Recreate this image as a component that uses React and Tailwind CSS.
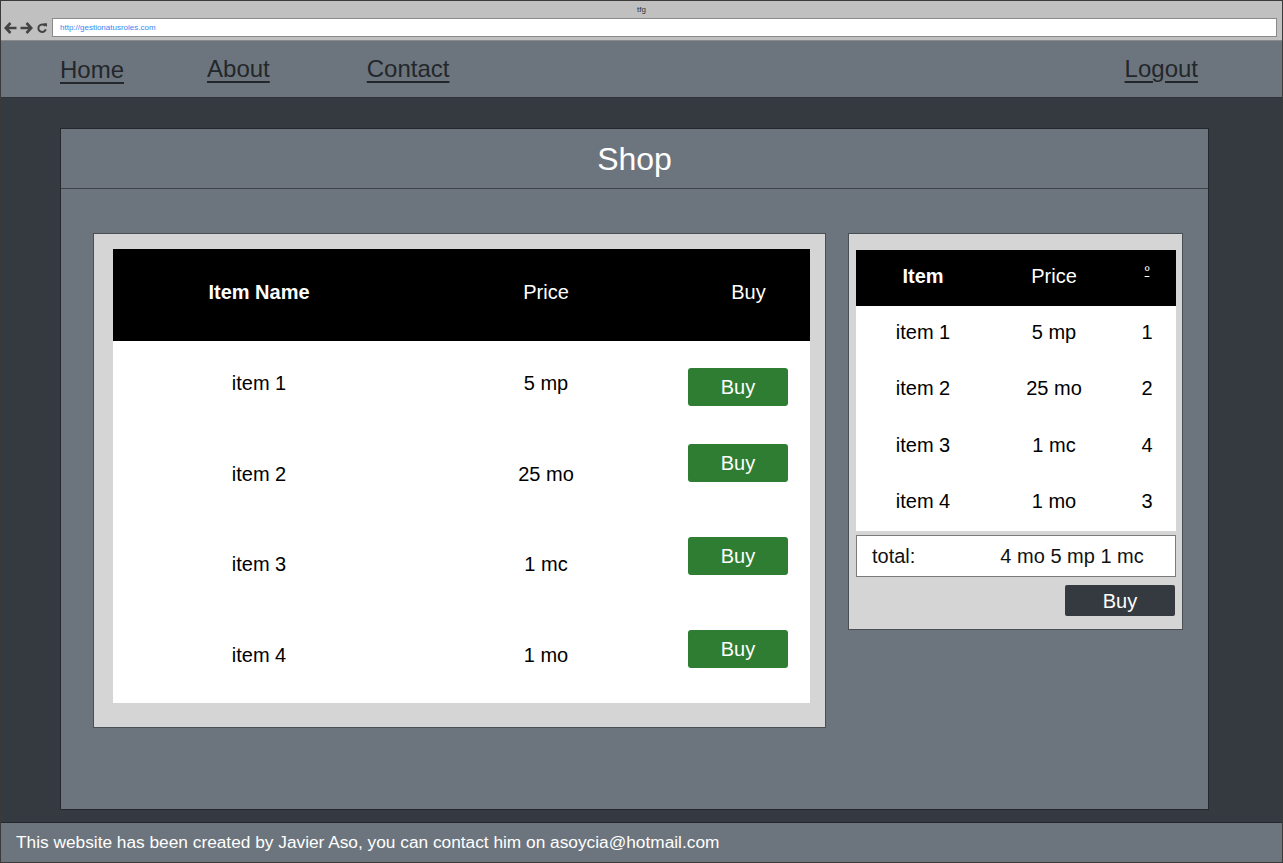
import React from 'react';

const shopItems = [
  { name: 'item 1', price: '5 mp', btn: 'mt-[8px]' },
  { name: 'item 2', price: '25 mo', btn: 'mb-[22px]' },
  { name: 'item 3', price: '1 mc', btn: 'mb-[16px]' },
  { name: 'item 4', price: '1 mo', btn: 'mb-[12px]' },
];

const cartItems = [
  { name: 'item 1', price: '5 mp', qty: 1 },
  { name: 'item 2', price: '25 mo', qty: 2 },
  { name: 'item 3', price: '1 mc', qty: 4 },
  { name: 'item 4', price: '1 mo', qty: 3 },
];

function BrowserChrome() {
  return (
    <div className="h-[40px] bg-[#c0c0c0] border-b border-[#8a8a8a] flex flex-col">
      <div className="h-[17px] text-[8px] leading-[17px] text-center text-[#333]">tfg</div>
      <div className="flex items-center h-[19px] pl-[3px] pr-[5px]">
        {/* back / forward / reload */}
        <svg width="13" height="12" viewBox="0 0 13 12">
          <path d="M6.5 1 L1.8 6 L6.5 11 M2 6 H12.5" stroke="#444" strokeWidth="2.6" fill="none" />
        </svg>
        <svg width="13" height="12" viewBox="0 0 13 12" className="ml-[3px]">
          <path d="M6.5 1 L11.2 6 L6.5 11 M11 6 H0.5" stroke="#444" strokeWidth="2.6" fill="none" />
        </svg>
        <svg width="12" height="12" viewBox="0 0 12 12" className="ml-[3px]">
          <path d="M9.3 4 A3.8 3.8 0 1 0 9.8 7.4" stroke="#444" strokeWidth="2" fill="none" />
          <path d="M7.2 1.2 L11 1.2 L11 5 Z" fill="#444" />
        </svg>
        <div className="flex-1 h-[19px] bg-white border border-[#8a8a8a] ml-[4px] pl-[7px] text-[8px] leading-[17px] text-[#3a86f5]">
          http://gestionatusroles.com
        </div>
      </div>
    </div>
  );
}

function NavBar() {
  return (
    <div className="h-[57px] bg-[#6c757d] border-b border-[#2f3337] flex items-center pl-[59px] pr-[84px] text-[24px] text-[#23272b]">
      <a className="underline underline-offset-[4px] decoration-[2px] mt-[2px]">Home</a>
      <a className="underline underline-offset-[4px] decoration-[2px] ml-[83px]">About</a>
      <a className="underline underline-offset-[4px] decoration-[2px] ml-[97px]">Contact</a>
      <a className="underline underline-offset-[4px] decoration-[2px] ml-auto">Logout</a>
    </div>
  );
}

function ShopTable() {
  return (
    <div className="w-[733px] bg-[#d5d5d5] border border-[#4a4f54] pt-[15px] pl-[19px] pr-[15px] pb-[24px]">
      <table className="w-full border-collapse bg-white text-[20px] text-black">
        <thead>
          <tr className="bg-black text-white h-[92px]">
            <th className="w-[292px] font-bold pb-[6px]">Item Name</th>
            <th className="w-[282px] font-normal pb-[6px]">Price</th>
            <th className="font-normal pb-[6px]">Buy</th>
          </tr>
        </thead>
        <tbody>
          {shopItems.map((it) => (
            <tr key={it.name} className="h-[90.5px]">
              <td className="text-center pb-[6px]">{it.name}</td>
              <td className="text-center pb-[6px]">{it.price}</td>
              <td className="text-left pl-[1px] pb-[6px]">
                <button className={`w-[100px] h-[38px] rounded-[3px] bg-[#2e7d32] text-white text-[20px] leading-[34px] ${it.btn}`}>
                  Buy
                </button>
              </td>
            </tr>
          ))}
        </tbody>
      </table>
    </div>
  );
}

function Cart() {
  return (
    <div className="w-[335px] bg-[#d5d5d5] border border-[#4a4f54] pt-[16px] pl-[7px] pr-[6px] pb-[13px] self-start">
      <table className="w-full border-collapse bg-white text-[20px] text-black">
        <thead>
          <tr className="bg-black text-white h-[56px]">
            <th className="w-[134px] font-bold pb-[4px]">Item</th>
            <th className="w-[128px] font-normal pb-[4px]">Price</th>
            <th className="font-normal text-[13px] align-middle pb-[14px]">
              <span className="underline">º</span>
            </th>
          </tr>
        </thead>
        <tbody>
          {cartItems.map((it) => (
            <tr key={it.name} className="h-[56.25px]">
              <td className="text-center pb-[4px]">{it.name}</td>
              <td className="text-center pb-[4px]">{it.price}</td>
              <td className="text-center pb-[4px]">{it.qty}</td>
            </tr>
          ))}
        </tbody>
      </table>
      <div className="mt-[4px] h-[42px] bg-white border border-[#7a7a7a] flex items-center pl-[15px] text-[20px] text-[#111]">
        <span>total:</span>
        <span className="ml-[85px]">4 mo 5 mp 1 mc</span>
      </div>
      <div className="flex justify-end mt-[8px]">
        <button className="w-[110px] h-[31px] bg-[#343a40] text-white text-[20px] leading-[28px] rounded-[2px] mr-[1px]">
          Buy
        </button>
      </div>
    </div>
  );
}

export default function App() {
  return (
    <div
      className="w-full h-[863px] flex flex-col border border-[#3a3a3a] overflow-hidden"
      style={{ fontFamily: '"Liberation Sans", Arial, sans-serif' }}
    >
      <BrowserChrome />
      <NavBar />

      <main className="flex-1 bg-[#343a40] pl-[59px] pr-[73px] pt-[30px] pb-[12px] flex">
        <div className="flex-1 bg-[#6c757d] border border-[#24282c] flex flex-col">
          <div className="h-[60px] border-b border-[#3e444a] flex items-center justify-center text-[32px] text-white">
            Shop
          </div>
          <div className="flex pl-[32px] pt-[44px] gap-[22px]">
            <ShopTable />
            <Cart />
          </div>
        </div>
      </main>

      <footer className="h-[40px] bg-[#6c757d] border-t border-[#24282c] flex items-center pl-[15px] text-[17.3px] text-white">
        This website has been created by Javier Aso, you can contact him on asoycia@hotmail.com
      </footer>
    </div>
  );
}
